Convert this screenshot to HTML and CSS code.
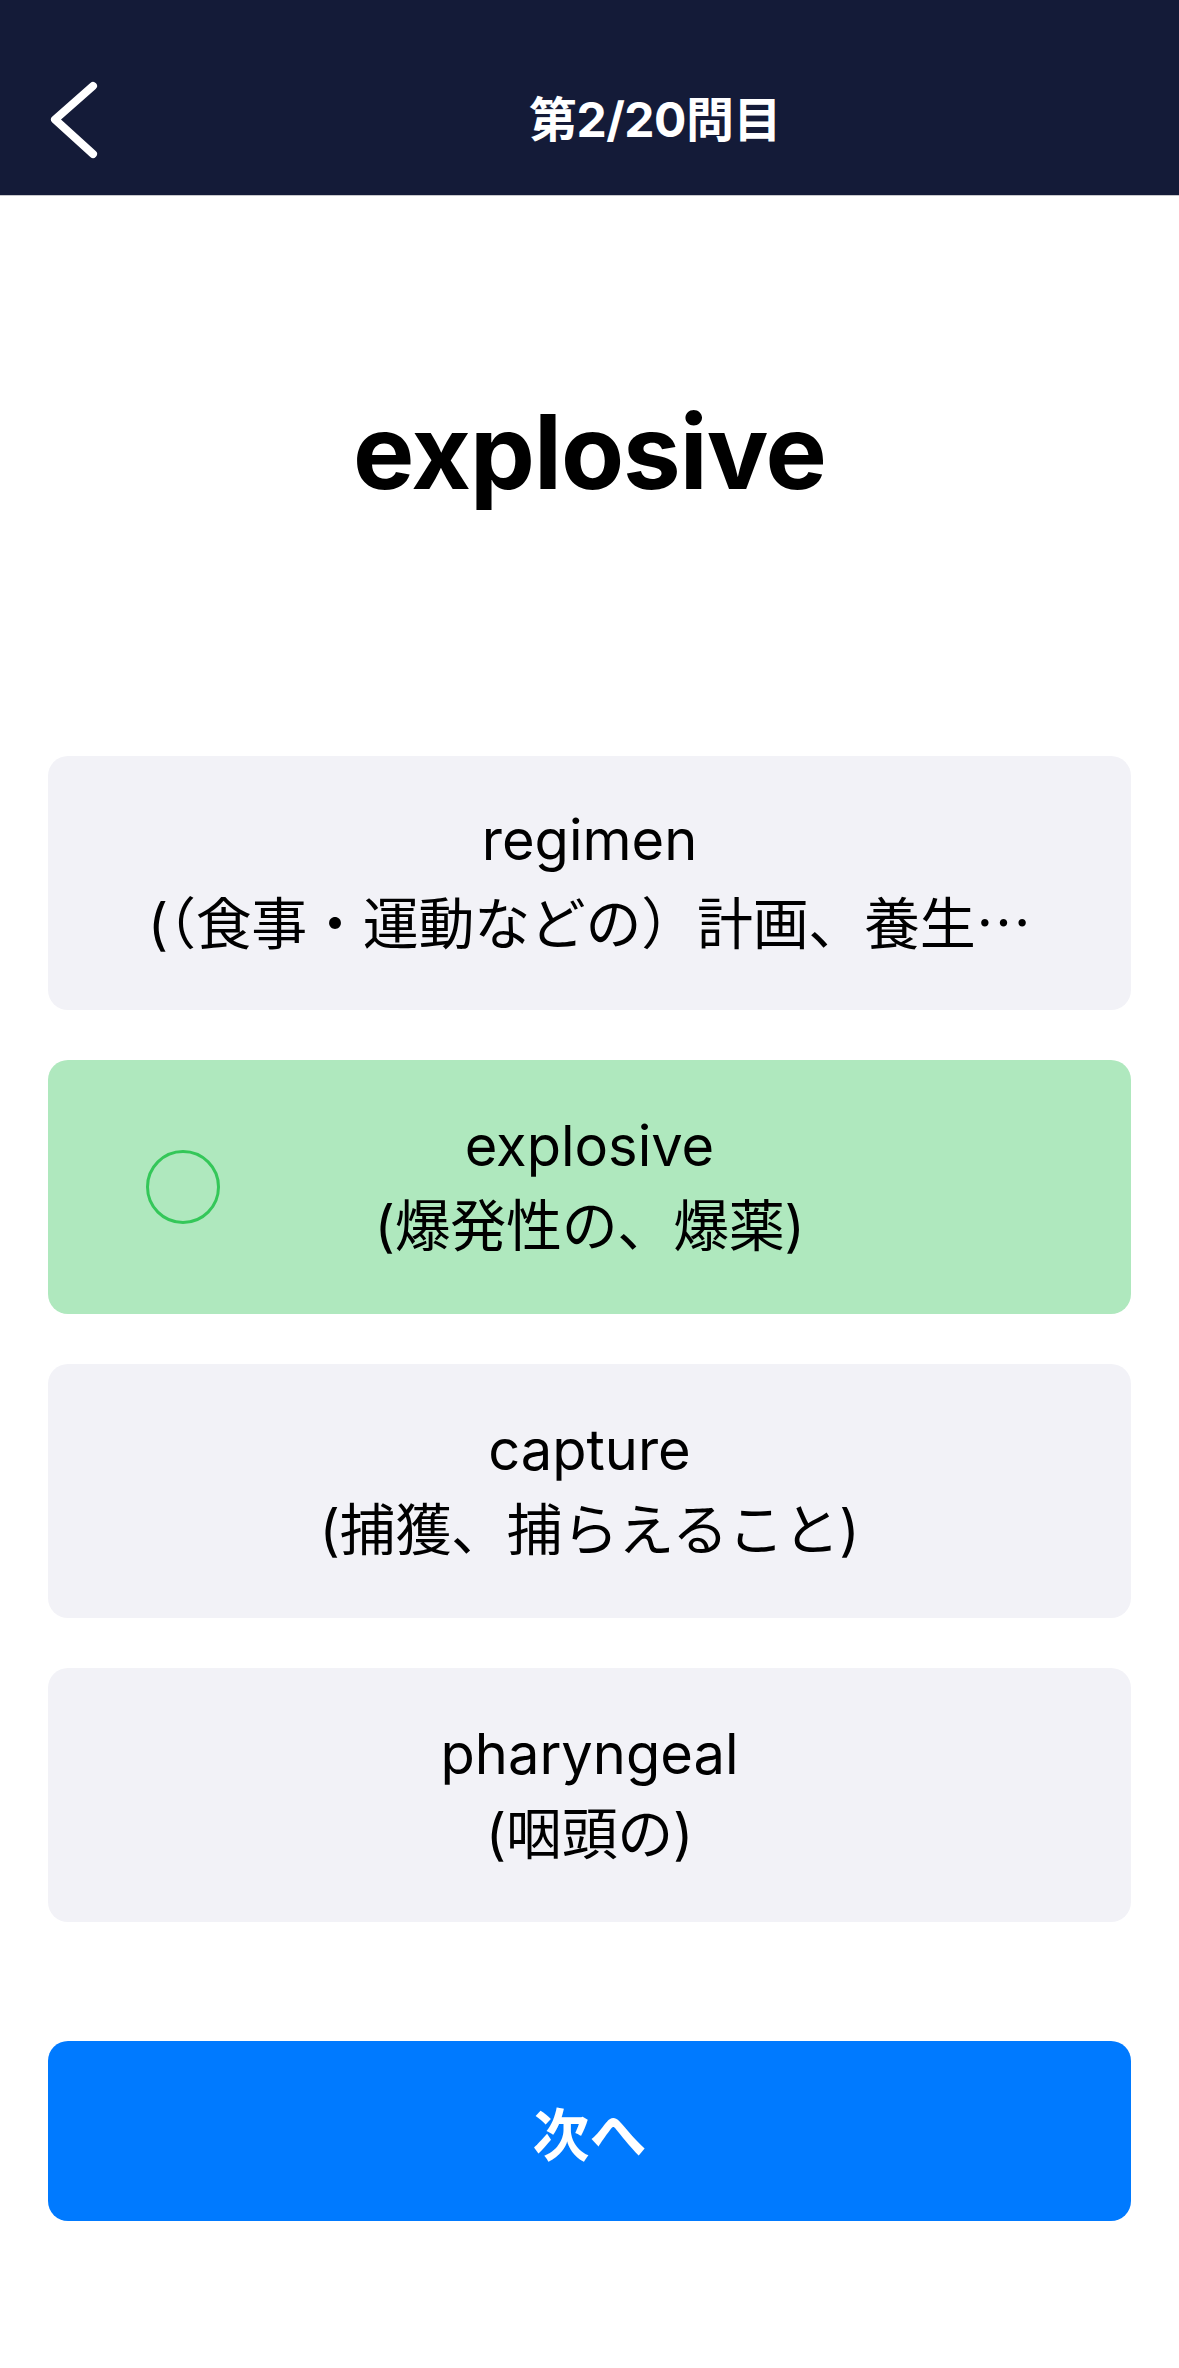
FILE: index.html
```html
<!DOCTYPE html>
<html lang="ja">
<head>
<meta charset="utf-8">
<title>第2/20問目</title>
<link rel="stylesheet" href="styles.css">
</head>
<body>
<header class="nav">
  <div class="nav-inner">
    <button class="back" aria-label="戻る">
      <svg width="60" height="90" viewBox="0 0 60 90" aria-hidden="true">
        <polyline points="48,11 10,44.5 48,79" fill="none" stroke="#ffffff" stroke-width="8" stroke-linecap="round" stroke-linejoin="round"/>
      </svg>
    </button>
    <h1 class="nav-title">第2/20問目</h1>
  </div>
</header>
<main class="quiz">
  <h2 class="word">explosive</h2>
  <ul class="choices">
    <li class="choice">
      <span class="en">regimen</span>
      <span class="ja">(（食事・運動などの）計画、養生<span class="cjk">…</span></span>
    </li>
    <li class="choice correct">
      <span class="mark"></span>
      <span class="en">explosive</span>
      <span class="ja">(爆発性の、爆薬)</span>
    </li>
    <li class="choice">
      <span class="en">capture</span>
      <span class="ja">(捕獲、捕らえること)</span>
    </li>
    <li class="choice">
      <span class="en">pharyngeal</span>
      <span class="ja">(咽頭の)</span>
    </li>
  </ul>
  <button class="next">次へ</button>
</main>
</body>
</html>
```
FILE: styles.css
```css
* { box-sizing: border-box; }
html, body {
  margin: 0;
  padding: 0;
  background: #ffffff;
}
body {
  font-family: "Inter", "Noto Sans CJK JP", sans-serif;
  color: #000000;
  width: 1179px;
}
.nav {
  background: #141b38;
  height: 196px;
  padding-top: 44px;
  border-bottom: 1px solid #c8c8cc;
}
.nav-inner {
  height: 151px;
  display: grid;
  grid-template-columns: 131px 1fr;
  align-items: center;
}
.back {
  justify-self: start;
  margin-left: 45px;
  padding: 0;
  border: 0;
  background: none;
  width: 60px;
  height: 90px;
  display: block;
}
.back svg { display: block; }
.nav-title {
  margin: 0;
  text-align: center;
  color: #ffffff;
  font-size: 48px;
  font-weight: 700;
  letter-spacing: -0.5px;
  line-height: 1;
}
.quiz {
  padding: 0 48px;
}
.word {
  margin: 0;
  padding-top: 196px;
  height: 560px;
  text-align: center;
  font-size: 103px;
  font-weight: 700;
  line-height: 120px;
  letter-spacing: -1px;
}
.choices {
  list-style: none;
  margin: 0;
  padding: 0;
  display: flex;
  flex-direction: column;
  gap: 50px;
}
.choice {
  position: relative;
  height: 254px;
  background: #f2f2f7;
  border-radius: 20px;
  display: flex;
  flex-direction: column;
  align-items: center;
  justify-content: center;
  text-align: center;
  font-size: 56px;
  line-height: 80px;
  padding-bottom: 2px;
}
.choice.correct {
  background: #afe8be;
}
.mark {
  position: absolute;
  left: 98px;
  top: 50%;
  width: 74px;
  height: 74px;
  margin-top: -37px;
  border: 3.5px solid #34c759;
  border-radius: 50%;
}
.en, .ja { display: block; white-space: nowrap; }
.ja { letter-spacing: -0.3px; }
.cjk { font-family: "Noto Sans CJK JP", sans-serif; }
.next {
  display: block;
  width: 100%;
  height: 180px;
  margin-top: 119px;
  border: 0;
  border-radius: 20px;
  background: #007aff;
  color: #ffffff;
  font-family: "Inter", "Noto Sans CJK JP", sans-serif;
  font-size: 57px;
  font-weight: 700;
}
```
